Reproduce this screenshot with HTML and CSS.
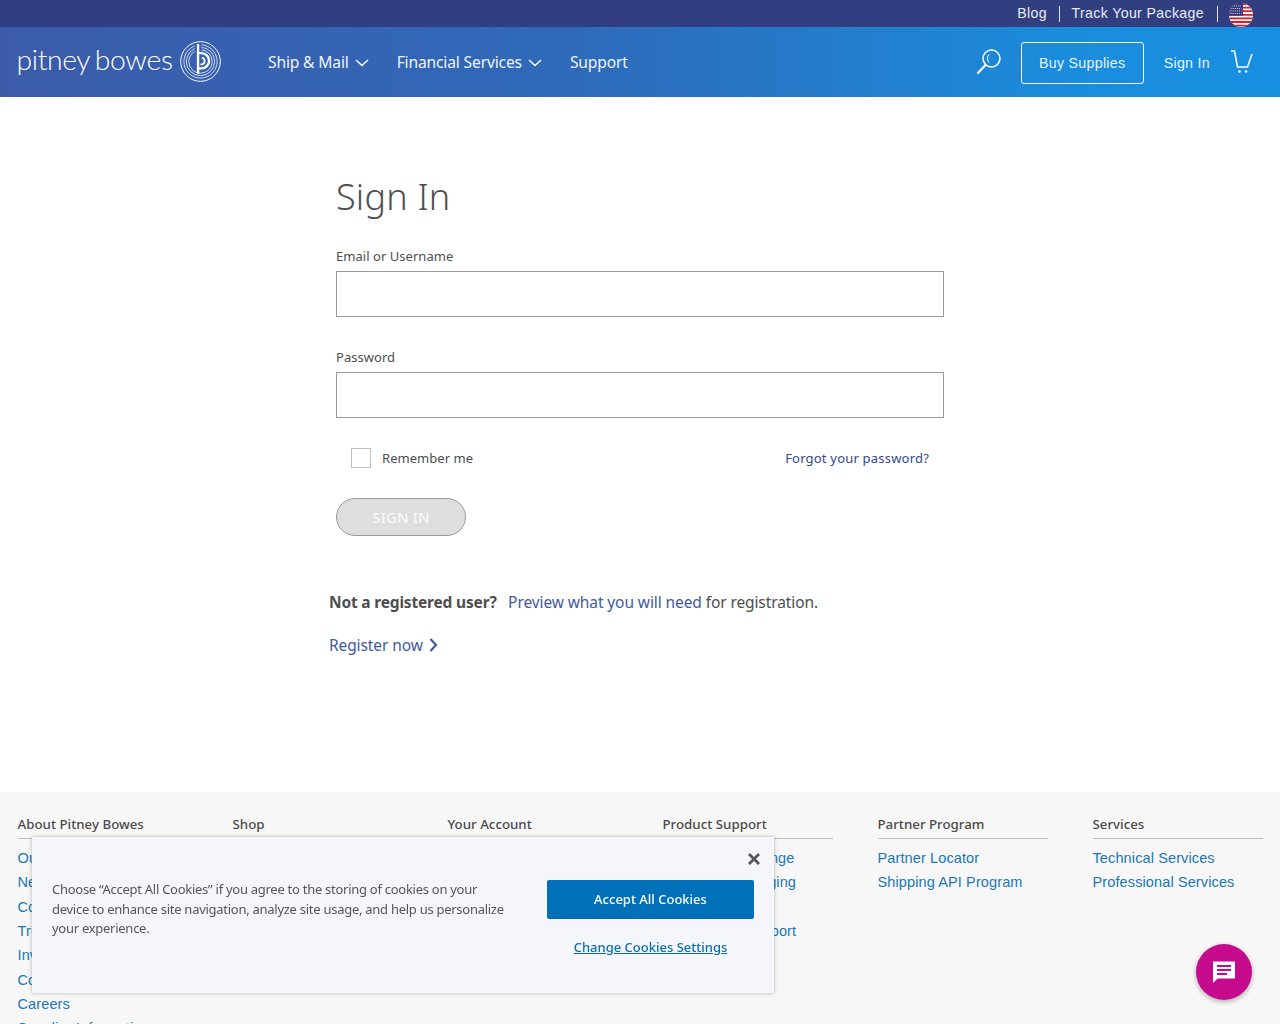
FILE: index.html
```html
<!DOCTYPE html>
<html lang="en">
<head>
<meta charset="utf-8">
<title>Sign In</title>
<link rel="stylesheet" href="styles.css">
</head>
<body>
<header>
  <div class="topbar">
    <a class="top-link">Blog</a>
    <span class="sep"></span>
    <a class="top-link">Track Your Package</a>
    <span class="sep sep-last"></span>
    <svg class="flag" viewBox="0 0 24 24" width="24" height="24">
      <defs><clipPath id="fc"><circle cx="12" cy="12" r="12"/></clipPath></defs>
      <g clip-path="url(#fc)">
        <rect width="24" height="24" fill="#f3f3f6"/>
        <path d="M0 1h24M0 4.600h24M0 8.200h24M0 11.800h24M0 15.400h24M0 19h24M0 22.600h24" stroke="#d3212f" stroke-width="1.800"/>
        <rect width="14" height="12.700" fill="#33377a"/>
        <path d="M3 3h9M1.500 5.500h11M1.500 8h11M1.500 10.500h11" stroke="#dfe1ee" stroke-width="1" stroke-dasharray="1 1.100"/>
      </g>
    </svg>
  </div>
  <div class="navbar">
    <a class="logo">
      <span class="logo-text">pitney bowes</span>
      <svg class="logo-mark" viewBox="0 0 42 42" width="41" height="41" fill="none" stroke="#fff">
        <circle cx="21" cy="21" r="20.300" stroke-width="1"/>
        <circle cx="21" cy="21" r="17" stroke-width=".8"/>
        <circle cx="21" cy="21" r="14.500" stroke-width=".8"/>
        <circle cx="21" cy="21" r="12" stroke-width=".8"/>
        <path d="M18.500 3v27" stroke="#3c60ac" stroke-width="7"/>
        <path d="M18.500 3v30.500" stroke-width="2.400"/>
        <path d="M18.500 12.500h3.500a7.800 7.800 0 0 1 0 15.600h-3.500" stroke-width="2.400"/>
        <path d="M22.500 17a3.600 3.600 0 0 1 0 7h-1.500" stroke-width="1.800"/>
      </svg>
    </a>
    <nav class="main-nav">
      <a class="nav-item">Ship &amp; Mail <svg class="chev" viewBox="0 0 14 8" width="14" height="8"><path d="M1 1l6 5.500L13 1" fill="none" stroke="#fff" stroke-width="1.500"/></svg></a>
      <a class="nav-item">Financial Services <svg class="chev" viewBox="0 0 14 8" width="14" height="8"><path d="M1 1l6 5.500L13 1" fill="none" stroke="#fff" stroke-width="1.500"/></svg></a>
      <a class="nav-item">Support</a>
    </nav>
    <div class="nav-right">
      <svg class="search" viewBox="0 0 26 28" width="26" height="28" fill="none" stroke="#fff">
        <circle cx="15.500" cy="10.500" r="8.500" stroke-width="1.500"/>
        <path d="M9.500 17L2 25" stroke-width="2.200" stroke-linecap="round"/>
        <path d="M13 6.500a6 6 0 0 0 0 8" stroke-width="1"/>
      </svg>
      <a class="buy">Buy Supplies</a>
      <a class="signin-link">Sign In</a>
      <svg class="cart" viewBox="0 0 24 26" width="24" height="26" fill="none" stroke="#fff">
        <path d="M1 2h3.500l3 16h10l4.500-13" stroke-width="1.500"/>
        <circle cx="9.500" cy="22.500" r="1.300" fill="#fff" stroke="none"/>
        <circle cx="16" cy="22.500" r="1.300" fill="#fff" stroke="none"/>
      </svg>
    </div>
  </div>
</header>

<main>
  <form class="form">
    <h1>Sign In</h1>
    <label class="field-label">Email or Username</label>
    <input class="field" type="text">
    <label class="field-label second">Password</label>
    <input class="field" type="password">
    <div class="options">
      <span class="remember"><span class="box"></span>Remember me</span>
      <a class="forgot">Forgot your password?</a>
    </div>
    <button class="submit" type="button" disabled>SIGN IN</button>
  </form>
  <div class="register">
    <p class="reg-line"><strong>Not a registered user?</strong><a class="reg-a">Preview what you will need</a> for registration.</p>
    <p class="reg-now"><a>Register now</a><svg viewBox="0 0 9 14" width="9" height="14"><path d="M1.500 1l5.500 6-5.500 6" fill="none" stroke="#3f5aa0" stroke-width="2.200"/></svg></p>
  </div>
</main>

<footer>
  <div class="cols">
    <div class="col"><h2>About Pitney Bowes</h2>
      <a>Our Company</a><a>Newsroom</a><a>Contact Us</a><a>Trust Center</a><a>Investor Relations</a><a>Corporate Responsibility</a><a>Careers</a><a>Supplier Information</a></div>
    <div class="col"><h2>Shop</h2></div>
    <div class="col"><h2>Your Account</h2></div>
    <div class="col"><h2>Product Support</h2><a>Postal Rate Change</a><a>Recycled Packaging</a><a class="blank">&nbsp;</a><a>Service and Support</a></div>
    <div class="col"><h2>Partner Program</h2><a>Partner Locator</a><a>Shipping API Program</a></div>
    <div class="col"><h2>Services</h2><a>Technical Services</a><a>Professional Services</a></div>
  </div>
</footer>

<aside class="cookie">
  <p class="cookie-text">Choose “Accept All Cookies” if you agree to the storing of cookies on your device to enhance site navigation, analyze site usage, and help us personalize your experience.</p>
  <div class="cookie-actions">
    <svg class="close" viewBox="0 0 14 14" width="14" height="14"><path d="M2 2l10 10M12 2L2 12" stroke="#565656" stroke-width="2.800"/></svg>
    <button class="accept" type="button">Accept All Cookies</button>
    <a class="settings">Change Cookies Settings</a>
  </div>
</aside>

<button class="chat" type="button" aria-label="Chat">
  <svg viewBox="0 0 24 24" width="24" height="24"><path d="M1 1.500h22v17H5.500L1 23z" fill="#fff"/><path d="M5 6h14M5 10h14M5 14h10" stroke="#c50a8d" stroke-width="2"/></svg>
</button>
</body>
</html>
```

FILE: styles.css
```css
* { box-sizing: border-box; }
html, body { margin: 0; padding: 0; height: 1024px; overflow: hidden; }
body { font-family: "Noto Sans", "Open Sans", sans-serif; color: #4e4e4e; background: #fff; }
a { cursor: pointer; }

.topbar {
  height: 27px;
  background: #313f81;
  display: flex;
  justify-content: flex-end;
  align-items: center;
  padding-right: 27px;
}
.top-link {
  font-family: "Liberation Sans", Arial, sans-serif;
  font-size: 14.100px;
  letter-spacing: .38px;
  color: #e8ebf5;
  line-height: 29px;
}
.sep { width: 1px; height: 16px; background: #dfe3f2; margin: 0 12px 0 11.500px; }
.sep-last { margin: 0 11px 0 13px; }
.flag { margin-top: 3px; }

.navbar {
  height: 70px;
  background: linear-gradient(90deg, #3b5ba9 0%, #2f6aba 45%, #1a8ddd 85%, #178fe0 100%);
  display: flex;
  align-items: center;
  padding: 0 26px 0 16.500px;
  color: #fff;
}
.logo { display: flex; align-items: center; gap: 7.500px; width: 204.500px; margin-top: -1px; }
.logo-text {
  font-family: "Lato", sans-serif;
  font-weight: 300;
  font-size: 28.300px;
  line-height: 34px;
  letter-spacing: -.35px;
  word-spacing: -2px;
  color: #fff;
  white-space: nowrap;
  margin-top: -5px;
}
.logo-mark { flex: none; }
.main-nav { display: flex; gap: 28px; margin-left: 47px; }
.nav-item {
  font-size: 15.600px;
  letter-spacing: -.15px;
  color: #eef3fb;
  display: flex;
  align-items: center;
  gap: 6px;
  white-space: nowrap;
}
.chev { margin-top: 1px; }
.nav-right { margin-left: auto; margin-top: 2px; display: flex; align-items: center; }
.search { margin-right: 19px; margin-top: -3px; }
.buy {
  font-family: "Liberation Sans", Arial, sans-serif;
  font-size: 14.200px;
  letter-spacing: .3px;
  color: #e8f2fb;
  border: 1px solid #fff;
  border-radius: 3px;
  width: 123px;
  height: 42px;
  display: flex;
  align-items: center;
  justify-content: center;
}
.signin-link {
  font-family: "Liberation Sans", Arial, sans-serif;
  font-size: 14.200px;
  letter-spacing: .3px;
  color: #e8f2fb;
  margin-left: 20px;
  margin-right: 20px;
}
.cart { margin-top: -2px; }

main { height: 695px; }
.form { width: 608px; margin: 0 auto; padding-top: 74px; }
h1 {
  margin: 0 0 24px;
  font-weight: 300;
  font-size: 36px;
  line-height: 52px;
  color: #4f4f4f;
  letter-spacing: .2px;
}
.field-label {
  display: block;
  font-size: 13px;
  letter-spacing: .04px;
  line-height: 18px;
  color: #4e4e4e;
  margin-bottom: 6px;
}
.field-label.second { margin-top: 31px; }
.field {
  display: block;
  width: 608px;
  height: 46px;
  border: 1px solid #9a9a9a;
  background: #fff;
  border-radius: 0;
  padding: 0;
}
.options {
  display: flex;
  justify-content: space-between;
  align-items: center;
  margin-top: 29px;
  padding: 0 15px;
  height: 22px;
  font-size: 13px;
  letter-spacing: .04px;
}
.remember { display: flex; align-items: center; gap: 11px; }
.box { width: 20px; height: 20px; border: 1px solid #bdbdbd; background: #fff; display: block; }
.forgot { color: #31478f; letter-spacing: .2px; }
.submit {
  display: block;
  width: 130px;
  height: 38px;
  margin-top: 29px;
  border: 1px solid #9b9b9b;
  border-radius: 19px;
  background: #dedede;
  color: #f8f8f8;
  font-family: inherit;
  font-size: 15px;
  font-weight: 500;
  letter-spacing: .1px;
  padding: 0 0 1px;
}
.register { width: 622px; margin: 0 auto; padding-top: 53px; }
.reg-line, .reg-now { margin: 0; font-size: 15.500px; line-height: 26px; color: #4e4e4e; letter-spacing: -.1px; }
.reg-line strong { font-weight: 700; letter-spacing: -.18px; }
.reg-a { color: #3f5aa0; margin-left: 11.500px; }
.reg-now { margin-top: 17px; color: #3f5aa0; display: flex; align-items: center; gap: 6px; }

footer { background: #f7f7f7; height: 232px; padding: 0 17.500px; }
.cols { display: grid; grid-template-columns: repeat(6, 170px); column-gap: 45px; padding-top: 23px; }
.col h2 {
  margin: 0 0 7px;
  font-size: 13.300px;
  font-weight: 500;
  color: #4a4a4a;
  line-height: 18px;
  padding-bottom: 5px;
  border-bottom: 1px solid #bdbdbd;
}
.col a {
  display: block;
  font-family: "Liberation Sans", Arial, sans-serif;
  font-size: 14.500px;
  line-height: 24.350px;
  letter-spacing: .12px;
  color: #1a77b5;
  white-space: nowrap;
}

.cookie {
  position: fixed;
  left: 32px;
  top: 837px;
  width: 742px;
  height: 156px;
  background: #f4f6fb;
  box-shadow: 0 0 4px rgba(0, 0, 0, .28);
  display: flex;
  color: #565656;
  font-size: 13px;
}
.cookie-text { margin: 43px 0 0 20px; width: 460px; line-height: 19.500px; letter-spacing: -.27px; }
.cookie-actions { margin-left: 35px; width: 207px; position: relative; padding-top: 43px; text-align: center; }
.close { position: absolute; right: -7px; top: 15px; }
.accept {
  display: block;
  width: 207px;
  height: 39px;
  background: #0070b8;
  color: #fff;
  border: 0;
  border-radius: 2px;
  font-family: inherit;
  font-size: 13px;
  font-weight: 500;
  padding: 0 0 2px;
}
.settings {
  display: block;
  margin-top: 19px;
  color: #0a6fb2;
  text-decoration: underline;
  font-size: 13px;
  font-weight: 500;
}

.chat {
  position: fixed;
  left: 1196px;
  top: 944px;
  width: 56px;
  height: 56px;
  border: 0;
  border-radius: 50%;
  background: #c50a8d;
  box-shadow: 0 2px 5px rgba(0, 0, 0, .3);
  display: flex;
  align-items: center;
  justify-content: center;
  padding: 0;
}
```
